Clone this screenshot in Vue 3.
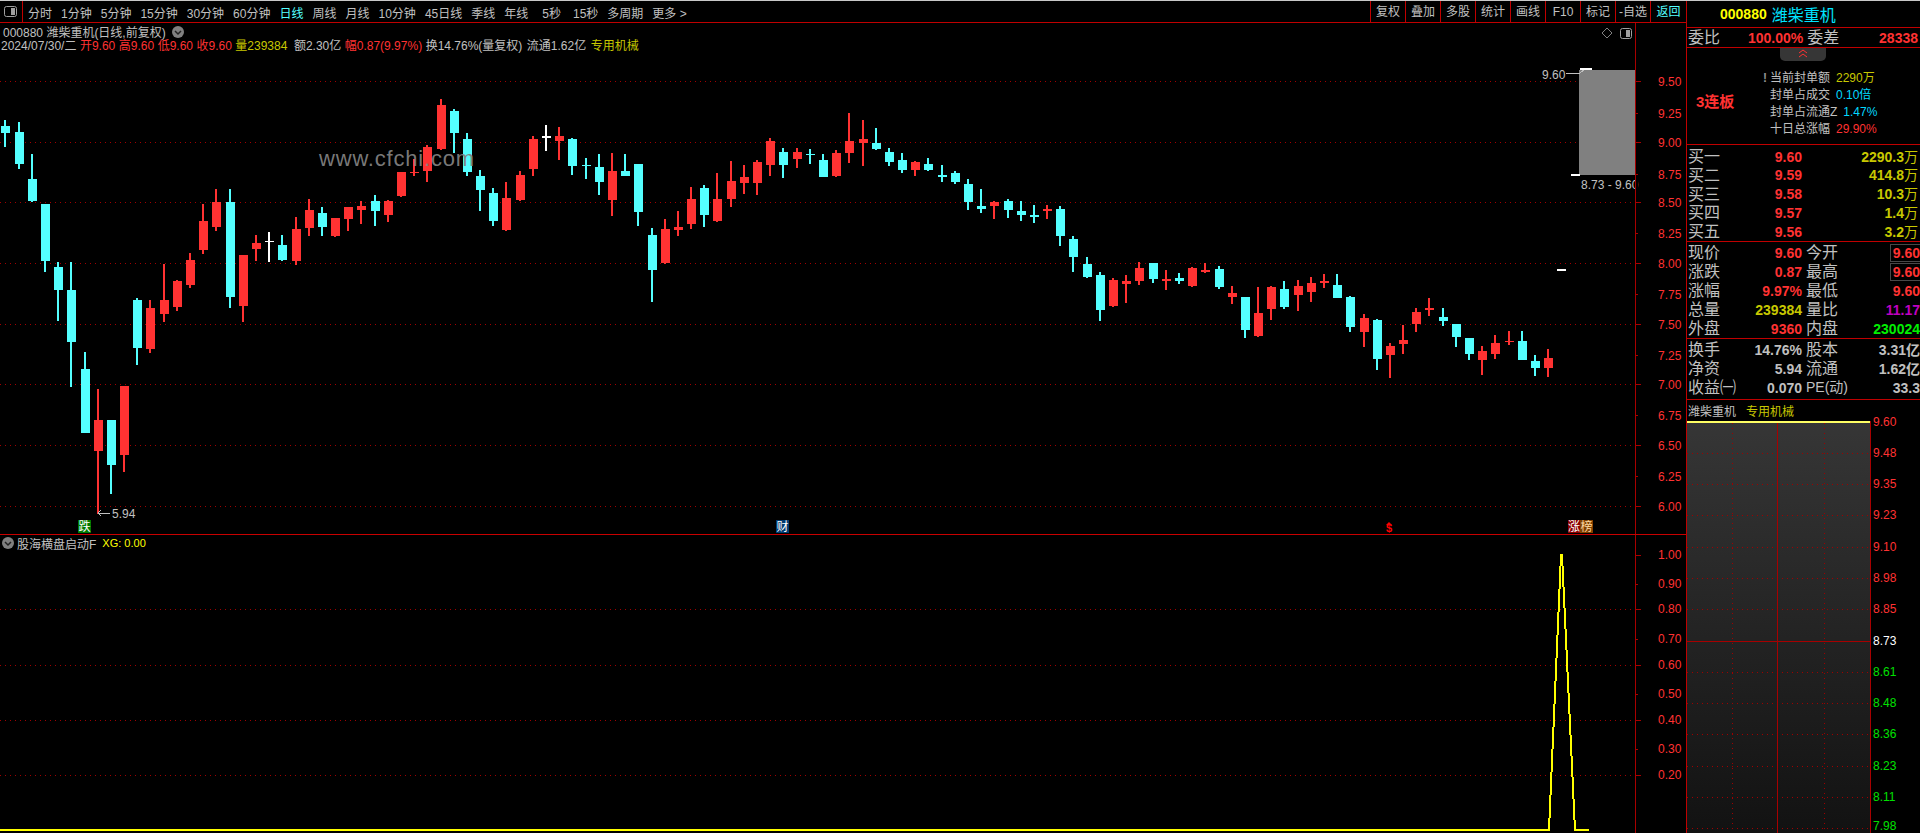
<script setup>
const segments = [
  [0, 100, [
    ['c',15,60,140,78,99],['c',58,66,207,96,192],['c',97,162,306,237,303],['c',136,312,516,312,483],
    ['c',175,486,663,501,570],['c',214,486,861,570,726],['c',256,756,999,807,999],['r',295,867,1242,960,1053],
    ['c',334,960,1182,960,1095],['r',373,858,1116,858,1065],['c',412,594,795,600,744],['r',451,600,759,624,747],
    ['r',493,492,666,600,642],['r',532,540,633,543,621],['r',571,459,564,480,555],['r',610,312,462,363,450],
    ['r',649,267,393,306,381],['c',691,267,624,306,591],['r',730,465,666,465,618],['r',769,405,483,429,447],
    ['w',808,396,486,423,426],['c',847,405,483,435,480],['r',889,351,495,387,483],['r',928,297,408,330,384],
    ['c',967,321,408,339,381],['r',1006,354,411,354,408],['r',1045,321,393,321,357],['r',1084,303,372,318,330],
    ['c',1126,285,378,303,333],['r',1165,300,366,303,345]
  ]],
  [400, 100, [
    ['r',4,216,291,216,288],['r',42,178,228,215,218],['r',82,135,246,141,213],['r',124,-3,150,15,147],
    ['c',163,27,159,33,99],['c',202,99,228,117,216],['c',241,210,333,228,270],['c',280,264,378,279,363],
    ['r',319,246,393,294,390],['r',361,213,303,225,300],['r',400,108,228,117,207],['w',439,75,153,109,113],
    ['r',478,81,180,108,123],['c',517,114,225,117,198],['c',557,174,237,195,198],['c',598,162,285,201,246],
    ['r',637,159,348,213,300],['c',676,162,228,213,228],['c',715,192,378,192,336],['c',757,384,606,405,510],
    ['r',796,357,492,387,489],['r',835,333,408,381,390],['r',874,261,387,297,372],['c',913,255,381,264,345],
    ['r',952,219,366,297,363],['r',994,183,321,243,297],['r',1033,195,282,231,249],['r',1072,180,285,186,249],
    ['r',1111,114,228,123,195],['c',1150,144,234,156,195],['r',1192,144,204,156,177]
  ]],
  [800, 100, [
    ['c',30,147,192,161,164],['c',70,162,231,180,231],['r',109,150,231,159,228],['r',148,39,189,123,159],
    ['r',190,60,198,117,129],['c',229,84,150,129,147],['c',268,144,198,156,186],['c',307,159,219,180,210],
    ['r',346,183,228,186,210],['c',385,174,213,192,210],['c',427,195,246,225,231],['c',466,213,252,219,246],
    ['c',505,237,330,252,306],['c',544,267,339,318,327],['r',583,303,357,306,318],['c',625,297,354,303,330],
    ['c',664,303,363,333,345],['c',703,315,369,345,351],['r',742,315,357,327,333],['c',781,318,438,327,408],
    ['c',820,408,516,417,471],['c',862,471,534,492,531],['c',901,516,663,525,630],['r',940,534,621,540,618],
    ['r',979,525,609,543,552],['r',1018,486,555,504,543],['c',1060,489,549,489,537],['r',1099,510,570,537,543],
    ['c',1138,519,552,534,543],['r',1177,501,561,504,558]
  ]],
  [1200, 240, [
    ['r',16,70,99,90,96],['c',58,78,147,87,141],['r',97,138,192,159,171],['c',136,171,294,171,270],
    ['r',175,141,291,219,288],['r',214,138,240,141,207],['c',253,123,207,147,201],['r',295,120,213,138,165],
    ['r',334,111,186,129,156],['r',373,102,144,123,129],['c',412,102,174,135,174],['c',451,168,276,171,261],
    ['r',493,222,321,234,276],['c',532,237,390,240,357],['r',571,309,414,318,345],['r',610,255,342,300,312],
    ['r',649,204,276,216,252],['r',688,174,228,204,210],['c',730,204,258,231,243],['c',769,252,321,252,291],
    ['c',808,294,360,294,342],['r',847,318,405,333,360],['r',886,285,357,309,342],['r',928,273,315,303,306],
    ['c',967,273,360,303,360],['c',1006,345,408,363,384],['r',1045,327,411,354,384]
  ]]
]

const colors = { r: '#ff3232', c: '#54ffff', w: '#ffffff' }

const candles = segments.flatMap(([ox, oy, rows]) =>
  rows.map(([kind, x, wickTop, wickBottom, bodyTop, bodyBottom]) => {
    const cx = Math.round(ox + x / 3)
    const wt = Math.round(oy + wickTop / 3)
    const wb = Math.round(oy + wickBottom / 3)
    const bt = Math.round(oy + bodyTop / 3)
    const bb = Math.round(oy + bodyBottom / 3)
    return { cx, wt, wh: wb - wt, bt, bh: Math.max(1, bb - bt), fill: colors[kind] }
  })
)

const mainAxis = [
  ['9.50', 81, 1], ['9.25', 113, 0], ['9.00', 142, 1], ['8.75', 174, 0], ['8.50', 202, 1],
  ['8.25', 233, 0], ['8.00', 263, 1], ['7.75', 294, 0], ['7.50', 324, 1], ['7.25', 355, 0],
  ['7.00', 384, 1], ['6.75', 415, 0], ['6.50', 445, 1], ['6.25', 476, 0], ['6.00', 506, 1]
]
const subAxis = [
  ['1.00', 555, 2], ['0.90', 584, 0], ['0.80', 609, 1], ['0.70', 639, 0], ['0.60', 665, 1],
  ['0.50', 694, 0], ['0.40', 720, 1], ['0.30', 749, 0], ['0.20', 775, 1]
]

const periodsLeft = ['分时', '1分钟', '5分钟', '15分钟', '30分钟', '60分钟', '日线', '周线', '月线', '10分钟', '45日线', '季线', '年线', '5秒', '15秒', '多周期', '更多 >']
const toolsRight = ['复权', '叠加', '多股', '统计', '画线', 'F10', '标记', '-自选', '返回']

const summary = [
  ['2024/07/30/二', 'gray'], ['开9.60', 'red'], ['高9.60', 'red'], ['低9.60', 'red'], ['收9.60', 'red'],
  ['量239384', 'olive'], ['额2.30亿', 'gray push-three'], ['幅0.87(9.97%)', 'red'], ['换14.76%(量复权)', 'gray'],
  ['流通1.62亿', 'gray push-one'], ['专用机械', 'olive push-one']
]

const sealRows = [
  ['当前封单额', '2290万', 'olive', true],
  ['封单占成交', '0.10倍', 'sky', false],
  ['封单占流通Z', '1.47%', 'sky', false],
  ['十日总涨幅', '29.90%', 'red', false]
]

const bids = [
  ['买一', '9.60', '2290.3', '万'], ['买二', '9.59', '414.8', '万'], ['买三', '9.58', '10.3', '万'],
  ['买四', '9.57', '1.4', '万'], ['买五', '9.56', '3.2', '万']
]

const quotes = [
  ['现价', '9.60', 'red', '今开', '9.60', 'red', true],
  ['涨跌', '0.87', 'red', '最高', '9.60', 'red', true],
  ['涨幅', '9.97%', 'red', '最低', '9.60', 'red', false],
  ['总量', '239384', 'olive', '量比', '11.17', 'purple', false],
  ['外盘', '9360', 'red', '内盘', '230024', 'green', false]
]

const funds = [
  ['换手', '14.76%', '股本', '3.31亿', false],
  ['净资', '5.94', '流通', '1.62亿', false],
  ['收益㈠', '0.070', 'PE(动)', '33.3', true]
]

const miniAxis = [
  ['9.48', 453, 'up', 453], ['9.35', 484, 'up', 484], ['9.23', 515, 'up', 515], ['9.10', 547, 'up', 547], ['8.98', 578, 'up', 578],
  ['8.85', 609, 'up', 609], ['8.73', 641, 'flat', 641], ['8.61', 672, 'down', 672], ['8.48', 703, 'down', 703], ['8.36', 734, 'down', 734],
  ['8.23', 766, 'down', 766], ['8.11', 797, 'down', 797], ['7.98', 828, 'down', 826]
]
</script>

<template>
  <div class="terminal">
    <div class="workspace">
      <div class="toolbar">
        <div class="panel-toggle">
          <svg width="13" height="11" viewBox="0 0 13 11">
            <rect x="0.5" y="0.5" width="12" height="10" rx="2" fill="none" stroke="#a0a0a0" />
            <rect x="7" y="2" width="4" height="7" fill="#a0a0a0" />
          </svg>
        </div>
        <div class="periods">
          <span
            v-for="p in periodsLeft"
            :key="p"
            :class="{ active: p === '日线', 'five-sec': p === '5秒', 'fifteen-sec': p === '15秒' }"
          >{{ p }}</span>
        </div>
        <div class="tools">
          <span v-for="t in toolsRight" :key="t" :class="{ active: t === '返回' }">{{ t }}</span>
        </div>
      </div>

      <div class="main-pane">
        <svg class="chart" width="1686" height="511" viewBox="0 23 1686 511">
          <g class="crisp">
            <line v-for="a in mainAxis.filter(m => m[2])" :key="a[0]" x1="0" x2="1635" :y1="a[1] + 0.5" :y2="a[1] + 0.5" class="dots" />
            <line x1="1635.5" x2="1635.5" y1="23" y2="534" class="axis" />
            <line v-for="a in mainAxis" :key="'t' + a[0]" x1="1636" :x2="a[2] ? 1641 : 1638" :y1="a[1] + 0.5" :y2="a[1] + 0.5" class="axis" />
            <g v-for="(c, i) in candles" :key="i" :fill="c.fill">
              <rect :x="c.cx - 1" :y="c.wt" width="2" :height="c.wh" />
              <rect :x="c.cx - 4" :y="c.bt" width="9" :height="c.bh" />
            </g>
            <rect x="1579" y="70" width="56" height="105" fill="#808080" />
            <rect x="1580" y="68" width="12" height="2" fill="#fff" />
            <rect x="1571" y="174" width="9" height="2" fill="#fff" />
            <rect x="1557" y="269" width="9" height="2" fill="#fff" />
            <rect x="98" y="513" width="12" height="1" fill="#c0c0c0" />
            <path d="M98 513 L101 510 M98 513 L101 516 M1566 73 L1580 73 L1584 70" fill="none" stroke="#c0c0c0" />
          </g>
          <text class="watermark" x="319" y="166">www.cfchi.com</text>
          <text v-for="a in mainAxis" :key="'l' + a[0]" class="label red-text" x="1658" :y="a[1] + 1">{{ a[0] }}</text>
          <text class="label gray-text" x="1542" y="75">9.60</text>
          <text class="label gray-text" x="1581" y="185">8.73 - 9.60</text>
          <rect x="1635" y="176" width="3" height="16" fill="#000" />
          <line class="crisp axis" x1="1635.5" x2="1635.5" y1="176" y2="192" />
          <text class="label gray-text" x="112" y="514">5.94</text>

          <path d="M1607 28 L1612 33 L1607 38 L1602 33 Z" fill="none" stroke="#808080" />
          <rect x="1620.5" y="28.5" width="11" height="10" rx="2" fill="none" stroke="#a0a0a0" />
          <rect x="1626" y="30" width="4" height="7" fill="#a0a0a0" class="crisp" />

          <rect class="crisp" x="78" y="520" width="13" height="13" fill="#007a00" />
          <text class="badge" x="84.5" y="526.5" fill="#fff">跌</text>
          <rect class="crisp" x="776" y="520" width="13" height="13" fill="#003a70" />
          <text class="badge" x="782.5" y="526.5" fill="#fff">财</text>
          <text class="dollar" x="1389" y="532">$</text>
          <path d="M1386 525 L1389 522 L1392 525 Z" fill="#ff0000" />
          <rect class="crisp" x="1568" y="520" width="12" height="13" fill="#8b0000" />
          <rect class="crisp" x="1580" y="520" width="13" height="13" fill="#804000" />
          <text class="badge" x="1574" y="526.5" fill="#fff">涨</text>
          <text class="badge" x="1586.5" y="526.5" fill="#ffd9a0">榜</text>
        </svg>

        <div class="info">
          <div class="info-title">
            <span>000880 潍柴重机(日线,前复权)</span>
            <svg width="12" height="12" viewBox="0 0 12 12">
              <circle cx="6" cy="6" r="6" fill="#808080" />
              <path d="M3 5 L6 8 L9 5" fill="none" stroke="#222" stroke-width="1.5" />
            </svg>
          </div>
          <div class="info-line">
            <span v-for="s in summary" :key="s[0]" :class="s[1]">{{ s[0] }}</span>
          </div>
        </div>
      </div>

      <div class="sub-pane">
        <svg class="chart" width="1686" height="298" viewBox="0 535 1686 298">
          <g class="crisp">
            <line v-for="a in subAxis.filter(m => m[2] === 1)" :key="a[0]" x1="0" x2="1635" :y1="a[1] + 0.5" :y2="a[1] + 0.5" class="dots" />
            <line x1="1635.5" x2="1635.5" y1="535" y2="833" class="axis" />
            <line v-for="a in subAxis" :key="'t' + a[0]" x1="1636" :x2="a[2] ? 1641 : 1638" :y1="a[1] + 0.5" :y2="a[1] + 0.5" class="axis" />
            <polyline points="0,830 1549,830 1561,555 1562,555 1575,830 1589,830" fill="none" stroke="#ffff00" stroke-width="2" />
          </g>
          <text v-for="a in subAxis" :key="'l' + a[0]" class="label red-text" x="1658" :y="a[1]">{{ a[0] }}</text>
        </svg>
        <div class="sub-head">
          <svg width="12" height="12" viewBox="0 0 12 12">
            <circle cx="6" cy="6" r="6" fill="#808080" />
            <path d="M3 5 L6 8 L9 5" fill="none" stroke="#222" stroke-width="1.5" />
          </svg>
          <span class="gray">股海横盘启动F</span>
          <span class="yellow">XG: 0.00</span>
        </div>
      </div>
    </div>

    <aside class="side">
      <div class="stock-head">
        <span class="code">000880</span>
        <span class="name">潍柴重机</span>
      </div>
      <div class="ratio">
        <span class="lab">委比</span>
        <b class="red r-one">100.00%</b>
        <span class="lab r-two">委差</span>
        <b class="red r-three">28338</b>
      </div>
      <div class="seal">
        <div class="collapse">
          <svg width="12" height="9" viewBox="0 0 12 9">
            <path d="M2 4 L6 1 L10 4 M2 8 L6 5 L10 8" fill="none" stroke="#ff3232" />
          </svg>
        </div>
        <div class="streak">3连板</div>
        <div class="seal-rows">
          <div v-for="r in sealRows" :key="r[0]" class="seal-row">
            <span v-if="r[3]" class="mark">!</span>
            <span class="gray">{{ r[0] }}</span>
            <span :class="r[2]">{{ r[1] }}</span>
          </div>
        </div>
      </div>
      <div class="bids">
        <div v-for="b in bids" :key="b[0]" class="bid">
          <span class="lab">{{ b[0] }}</span>
          <b class="red num">{{ b[1] }}</b>
          <b class="olive num">{{ b[2] }}<span class="unit">{{ b[3] }}</span></b>
        </div>
      </div>
      <div class="quotes">
        <div v-for="q in quotes" :key="q[0]" class="quote">
          <span class="lab">{{ q[0] }}</span>
          <b class="num" :class="q[2]">{{ q[1] }}</b>
          <span class="lab lab-two">{{ q[3] }}</span>
          <b class="num" :class="[q[5], { boxed: q[6] }]">{{ q[4] }}</b>
        </div>
      </div>
      <div class="funds">
        <div v-for="f in funds" :key="f[0]" class="quote">
          <span class="lab nowrap">{{ f[0] }}</span>
          <b class="num gray">{{ f[1] }}</b>
          <span class="lab lab-two nowrap" :class="{ pe: f[4] }">{{ f[2] }}</span>
          <b class="num gray">{{ f[3] }}</b>
        </div>
      </div>
      <div class="mini-head">
        <span class="gray">潍柴重机</span>
        <span class="olive">专用机械</span>
      </div>
      <svg class="mini" width="233" height="412" viewBox="1687 421 233 412">
        <defs>
          <linearGradient id="miniFill" x1="0" x2="0" y1="0" y2="1">
            <stop offset="0" stop-color="#363636" />
            <stop offset="1" stop-color="#121212" />
          </linearGradient>
        </defs>
        <g class="crisp">
          <rect x="1687" y="421" width="183" height="412" fill="url(#miniFill)" />
          <line v-for="a in miniAxis.filter(m => m[2] !== 'flat')" :key="a[0]" x1="1687" x2="1870" :y1="a[1] + 0.5" :y2="a[1] + 0.5" class="dots" />
          <line x1="1732.5" x2="1732.5" y1="423" y2="833" class="dots" />
          <line x1="1824.5" x2="1824.5" y1="423" y2="833" class="dots" />
          <line x1="1777.5" x2="1777.5" y1="423" y2="833" class="axis" />
          <line x1="1687" x2="1870" y1="641.5" y2="641.5" class="axis" />
          <line x1="1870.5" x2="1870.5" y1="421" y2="833" class="axis" />
          <rect x="1687" y="421" width="183" height="2" fill="#ffff64" />
        </g>
        <text class="label red-text" x="1873" y="422">9.60</text>
        <text v-for="a in miniAxis" :key="'m' + a[0]" class="label" :class="a[2]" x="1873" :y="a[3]">{{ a[0] }}</text>
      </svg>
    </aside>
  </div>
</template>

<style>
html, body {
  margin: 0;
  background: #000;
  overflow: hidden;
}
</style>

<style scoped>
.terminal {
  display: flex;
  width: 1920px;
  height: 833px;
  box-sizing: border-box;
  border-top: 1px solid #c8c8c8;
  background: #000;
  overflow: hidden;
  font-family: "Liberation Sans", "Noto Sans CJK SC", sans-serif;
  font-size: 12px;
  color: #c0c0c0;
}
.workspace {
  width: 1686px;
  flex: none;
  display: flex;
  flex-direction: column;
}
.toolbar {
  display: flex;
  flex: none;
  height: 22px;
  box-sizing: border-box;
  border-bottom: 1px solid #c00000;
  align-items: stretch;
}
.panel-toggle {
  width: 23px;
  box-sizing: border-box;
  border-right: 1px solid #c00000;
  padding: 5px 0 0 4px;
}
.panel-toggle svg { display: block; }
.periods {
  display: flex;
  align-items: center;
  gap: 9px;
  padding: 1px 0 0 5px;
  white-space: nowrap;
}
.periods .five-sec { margin-left: 5px; }
.periods .fifteen-sec { margin-left: 3px; }
.tools {
  display: flex;
  margin-left: auto;
}
.tools span {
  width: 35px;
  box-sizing: border-box;
  border-left: 1px solid #c00000;
  text-align: center;
  line-height: 22px;
  white-space: nowrap;
}
.tools span:last-child { width: 36px; }
.active { color: #54ffff; }

.main-pane {
  position: relative;
  flex: none;
  height: 512px;
  box-sizing: border-box;
  border-bottom: 1px solid #c80000;
}
.sub-pane {
  position: relative;
  flex: 1;
}
.chart { display: block; }
.crisp { shape-rendering: crispEdges; }
.dots {
  stroke: #a00000;
  stroke-width: 1;
  stroke-dasharray: 1 4;
}
.axis {
  stroke: #a80000;
  stroke-width: 1;
}
.label {
  font-size: 12px;
  dominant-baseline: central;
}
.red-text { fill: #ff3232; }
.gray-text { fill: #c0c0c0; }
.up { fill: #ff3232; }
.flat { fill: #ffffff; }
.down { fill: #00e000; }
.watermark {
  font-size: 22px;
  letter-spacing: 0.8px;
  fill: #808080;
  fill-opacity: 0.95;
}
.badge {
  font-size: 12px;
  text-anchor: middle;
  dominant-baseline: central;
}
.dollar {
  font-size: 11px;
  font-weight: 700;
  text-anchor: middle;
  fill: #ff0000;
}
.info {
  position: absolute;
  left: 0;
  top: 1px;
  white-space: nowrap;
}
.info-title {
  display: flex;
  align-items: center;
  gap: 6px;
  height: 15px;
  padding-left: 3px;
}
.info-title svg, .sub-head svg { flex: none; }
.info-line {
  display: flex;
  gap: 3.5px;
  height: 14px;
  line-height: 14px;
  padding-left: 1px;
}
.push-three { margin-left: 3px; }
.push-one { margin-left: 1px; }
.sub-head {
  position: absolute;
  left: 2px;
  top: 1px;
  display: flex;
  align-items: center;
  height: 14px;
  white-space: nowrap;
}
.sub-head .gray { margin-left: 3px; }
.sub-head .yellow { margin-left: 6px; font-size: 11px; }

.gray { color: #c0c0c0; }
.red { color: #ff3232; }
.olive { color: #c8c800; }
.yellow { color: #ffff00; }
.sky { color: #00d8ff; }
.purple { color: #c000c0; }
.green { color: #00f000; }

.side {
  flex: 1;
  min-width: 0;
  box-sizing: border-box;
  border-left: 1px solid #c00000;
  display: flex;
  flex-direction: column;
}
.stock-head {
  display: flex;
  align-items: center;
  height: 27px;
  flex: none;
  padding-left: 33px;
  gap: 5px;
  box-sizing: border-box;
  border-bottom: 1px solid #c00000;
}
.code {
  color: #ffff00;
  font-size: 14px;
  font-weight: 700;
}
.name {
  color: #00e4ff;
  font-size: 16px;
}
.ratio {
  position: relative;
  display: flex;
  align-items: center;
  height: 20px;
  flex: none;
  box-sizing: border-box;
  border-bottom: 1px solid #c00000;
  padding-left: 1px;
  white-space: nowrap;
}
.lab { font-size: 16px; line-height: 19px; color: #c0c0c0; }
.ratio b { font-size: 14px; }
.r-one { margin-left: 28px; }
.r-two { margin-left: 4px; }
.r-three { margin-left: auto; padding-right: 2px; }

.seal {
  position: relative;
  height: 97px;
  flex: none;
  box-sizing: border-box;
  border-bottom: 1px solid #c00000;
  display: flex;
}
.collapse {
  position: absolute;
  left: 93px;
  top: 0;
  width: 46px;
  height: 13px;
  background: #363636;
  border-radius: 0 0 5px 5px;
  text-align: center;
}
.collapse svg { display: block; margin: 1px auto 0; }
.streak {
  width: 83px;
  box-sizing: border-box;
  padding: 44px 0 0 9px;
  font-size: 15px;
  line-height: 20px;
  font-weight: 700;
  color: #ff3232;
}
.seal-rows {
  padding-top: 22px;
}
.seal-row {
  position: relative;
  display: flex;
  gap: 6px;
  height: 17px;
  line-height: 17px;
  white-space: nowrap;
}
.mark {
  position: absolute;
  left: -7px;
  top: 0;
  color: #909090;
  font-weight: 700;
}

.bids {
  flex: none;
  height: 97px;
  box-sizing: border-box;
  padding-top: 2px;
  border-bottom: 1px solid #c00000;
  display: grid;
  grid-auto-rows: 18.8px;
}
.bid {
  display: grid;
  grid-template-columns: 36px 78px 1fr;
  align-items: center;
  padding: 0 2px 0 1px;
}
.num {
  font-size: 14px;
  line-height: 18px;
  text-align: right;
  white-space: nowrap;
}
.unit { font-weight: 400; font-size: 14px; }
.quotes {
  flex: none;
  height: 97px;
  box-sizing: border-box;
  padding-top: 1px;
  border-bottom: 1px solid #c00000;
  display: grid;
  grid-auto-rows: 19px;
}
.funds {
  flex: none;
  height: 61px;
  box-sizing: border-box;
  padding-top: 1px;
  border-bottom: 1px solid #c00000;
  display: grid;
  grid-auto-rows: 19px;
}
.quote {
  display: grid;
  grid-template-columns: 34px 80px 37px 81px;
  align-items: center;
  padding-left: 1px;
}
.lab-two { padding-left: 4px; }
.nowrap { white-space: nowrap; }
.pe { font-size: 14px; }
.boxed {
  justify-self: end;
  width: 30px;
  height: 18px;
  box-sizing: border-box;
  border: 1px solid #484848;
  border-right: 0;
  line-height: 16px;
}
.mini-head {
  display: flex;
  gap: 10px;
  height: 21px;
  flex: none;
  align-items: center;
  padding-left: 1px;
}
.mini { display: block; flex: none; overflow: visible; }
</style>
